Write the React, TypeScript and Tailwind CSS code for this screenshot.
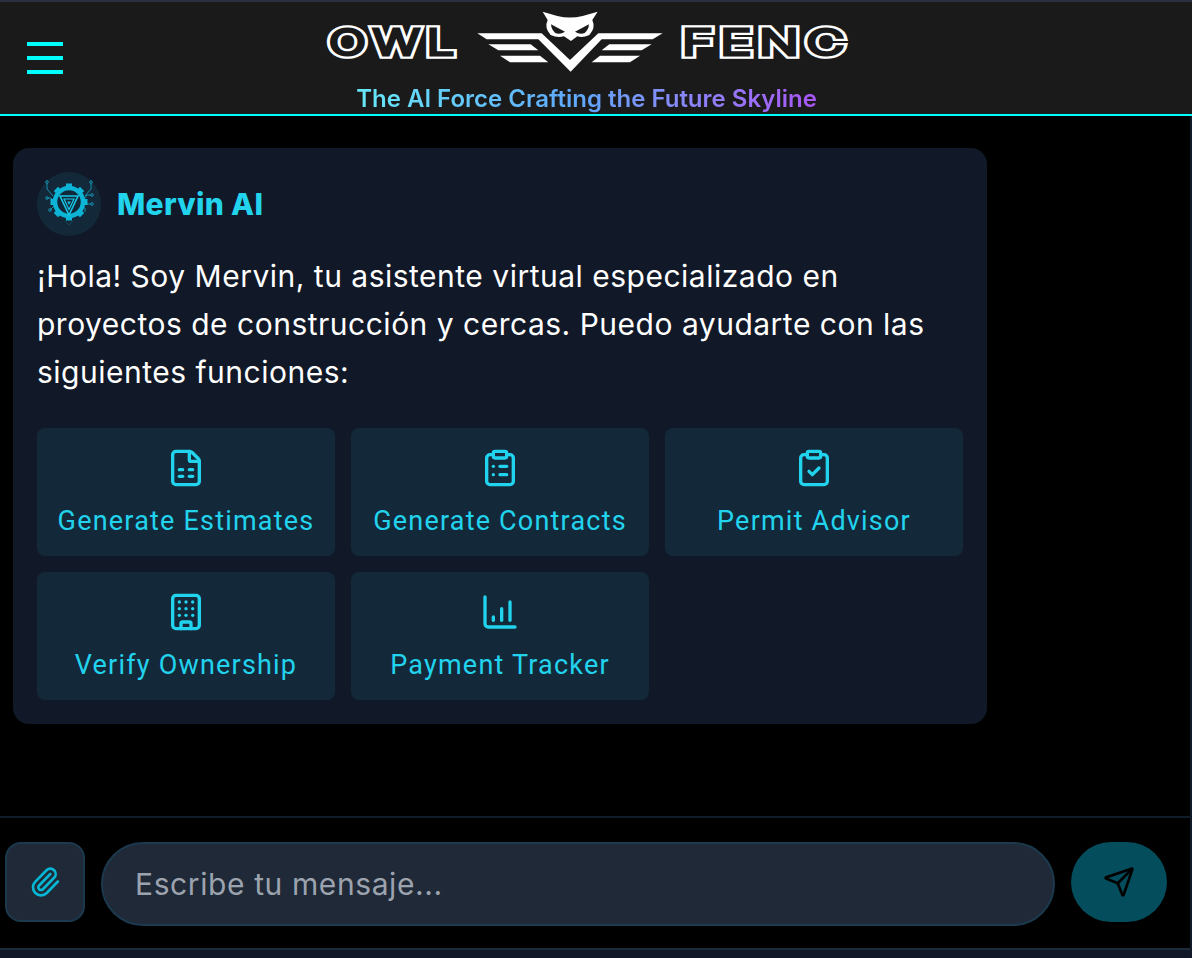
import { Building, ClipboardCheck, ClipboardList, FileSpreadsheet, Paperclip, Send } from "lucide-react";

function PaymentIcon({ size }: { size: number }) {
  return (
    <svg width={size} height={size} viewBox="0 0 24 24" fill="none" stroke="currentColor" strokeWidth={2} strokeLinecap="round" strokeLinejoin="round">
      <path d="M3 3v16a2 2 0 0 0 2 2h16" />
      <path d="M8 17v-2" />
      <path d="M13 17v-7" />
      <path d="M18 17V6" />
    </svg>
  );
}

const actions = [
  { label: "Generate Estimates", icon: <FileSpreadsheet size={40} strokeWidth={2} /> },
  { label: "Generate Contracts", icon: <ClipboardList size={40} strokeWidth={2} /> },
  { label: "Permit Advisor", icon: <ClipboardCheck size={40} strokeWidth={2} /> },
  { label: "Verify Ownership", icon: <Building size={40} strokeWidth={2} /> },
  { label: "Payment Tracker", icon: <PaymentIcon size={40} /> },
];

function LogoWord({ x, width, children }: { x: number; width: number; children: string }) {
  const common = {
    x,
    y: 55,
    textLength: width,
    lengthAdjust: "spacingAndGlyphs" as const,
    fontFamily: "'Inter', sans-serif",
    fontWeight: 300,
    fontSize: 35,
    letterSpacing: 5,
    strokeLinejoin: "miter" as const,
  };
  return (
    <>
      <text {...common} fill="#ffffff" stroke="#ffffff" strokeWidth={7.5}>{children}</text>
      <text {...common} fill="#1a1a1a" stroke="#1a1a1a" strokeWidth={3}>{children}</text>
    </>
  );
}

function Logo() {
  return (
    <svg width="524" height="66" viewBox="325 9 524 66">
      <LogoWord x={329} width={132}>OWL</LogoWord>
      <LogoWord x={682} width={170}>FENC</LogoWord>
      {/* emblem, drawn at 3x */}
      <g transform="translate(470 5) scale(0.3333)" fill="#ffffff">
        <polygon points="22,85 215,85 300,165 385,85 578,85 548,103 395,103 302,200 205,103 50,103" />
        <polygon points="55,118 182,118 205,136 85,136" />
        <polygon points="90,152 210,152 235,172 120,172" />
        <polygon points="545,118 418,118 395,136 515,136" />
        <polygon points="510,152 390,152 365,172 480,172" />
        <path d="M218 20 L262 33 Q300 42 338 33 L383 20 L367 45 Q378 68 358 90 Q338 100 322 94 L303 108 L282 94 Q262 100 242 90 Q222 68 233 45 Z" />
        <path d="M243 58 L285 80 Q270 90 256 84 Q244 74 243 58 Z" fill="#1a1a1a" />
        <path d="M357 58 L315 80 Q330 90 344 84 Q356 74 357 58 Z" fill="#1a1a1a" />
      </g>
    </svg>
  );
}

function MervinAvatar() {
  const teeth = [0, 45, 90, 135, 180, 225, 270, 315];
  return (
    <div className="w-16 h-16 rounded-full bg-[#13293a] flex items-center justify-center shrink-0">
      <svg width="64" height="64" viewBox="0 0 64 64" fill="none">
        {/* circuit traces */}
        <g stroke="#1391ad" strokeWidth="1">
          <path d="M10 11 L10 17 L16 24 M10 26 L14 26 L17 30 M13 38 L17 34 L20 34" />
          <path d="M54 11 L54 17 L48 24 M54 23 L50 23 L47 27 M54 32 L49 32 M48 40 L48 36 L45 35" />
          <circle cx="10" cy="10" r="1.3" />
          <circle cx="54" cy="10" r="1.3" />
          <circle cx="10" cy="26" r="1.3" />
          <circle cx="55" cy="23" r="1.3" />
          <circle cx="55" cy="32" r="1.3" />
          <circle cx="13" cy="38" r="1.3" />
        </g>
        {/* gear */}
        <g fill="#0cb4d6">
          {teeth.map((deg) => (
            <rect key={deg} x="29" y="11.5" width="6" height="6" transform={`rotate(${deg} 32 30)`} />
          ))}
        </g>
        <circle cx="32" cy="30" r="14" stroke="#0cb4d6" strokeWidth="4.5" fill="#10283a" />
        <path d="M23 24 H41 L32 43 Z" stroke="#19c6e6" strokeWidth="1.6" />
        <path d="M27 27 H37 L32 37.5 Z" stroke="#19c6e6" strokeWidth="1.2" />
        <path d="M30.2 29.5 H33.8 L32 33 Z" fill="#19c6e6" />
        <path d="M28 49 L32 53 L36 49" stroke="#164457" strokeWidth="1" />
      </svg>
    </div>
  );
}

export default function App() {
  return (
    <div className="h-[958px] flex flex-col bg-black overflow-hidden font-['Inter','Noto_Sans',sans-serif]">
      {/* 헤더 */}
      <header className="h-[116px] shrink-0 flex bg-[#1a1a1a] border-t-2 border-t-[#2a3040] border-b-2 border-b-[#00ffff]">
        <div className="pl-[27px] pt-10 flex flex-col gap-[10px]">
          <span className="block w-9 h-1 bg-[#00ffff]"></span>
          <span className="block w-9 h-1 bg-[#00ffff]"></span>
          <span className="block w-9 h-1 bg-[#00ffff]"></span>
        </div>
        <div className="flex-1 pr-[82px] flex flex-col items-center pt-[7px]">
          <Logo />
          <span className="mt-[9px] text-[24px] leading-[30px] font-semibold bg-gradient-to-r from-[#67e8f9] via-[#60a5fa] to-[#a855f7] bg-clip-text text-transparent">
            The AI Force Crafting the Future Skyline
          </span>
        </div>
      </header>

      <div className="flex-1 flex flex-col border-r-2 border-[#111a28]">
        {/* 메시지 영역 */}
        <main className="flex-1 pt-8 pl-[13px]">
          <div className="w-[974px] h-[576px] bg-[#111827] rounded-2xl p-6">
            <div className="flex items-center gap-4">
              <MervinAvatar />
              <span className="text-[30px] font-extrabold tracking-[0.3px] text-[#22d3ee]">Mervin AI</span>
            </div>
            <p className="mt-4 text-[30px] leading-[48px] tracking-[0.5px] text-white">
              ¡Hola! Soy Mervin, tu asistente virtual especializado en proyectos de construcción y cercas. Puedo ayudarte con las siguientes funciones:
            </p>
            <div className="mt-8 grid grid-cols-3 gap-4">
              {actions.map(({ label, icon }) => (
                <button key={label} className="h-32 rounded-lg bg-[#13293a] flex flex-col items-center pt-5 gap-[13px] text-[#22d3ee]">
                  {icon}
                  <span className="text-[27px] leading-10 tracking-[1.2px] font-['Roboto',sans-serif]">{label}</span>
                </button>
              ))}
            </div>
          </div>
        </main>

        {/* 입력 영역 */}
        <section className="h-[132px] shrink-0 border-t-2 border-[#0f1c2a] flex items-start gap-4 pt-6 pl-[5px] pr-[23px]">
          <button className="w-20 h-20 shrink-0 rounded-2xl bg-[#1f2937] border-2 border-[#1c3a4e] flex items-center justify-center text-[#06b6d4]">
            <Paperclip size={32} strokeWidth={2} />
          </button>
          <div className="flex-1 h-[84px] rounded-full bg-[#1f2937] border-2 border-[#1c3a4e] flex items-center px-8 text-[30px] tracking-[0.6px] text-[#9ca3af]">
            Escribe tu mensaje...
          </div>
          <button className="w-24 h-20 shrink-0 rounded-full bg-[#044d5c] flex items-center justify-center text-black">
            <Send size={32} strokeWidth={2} />
          </button>
        </section>

        <footer className="h-[10px] shrink-0 bg-[#111827] border-t-2 border-[#1c2a3a]"></footer>
      </div>
    </div>
  );
}
